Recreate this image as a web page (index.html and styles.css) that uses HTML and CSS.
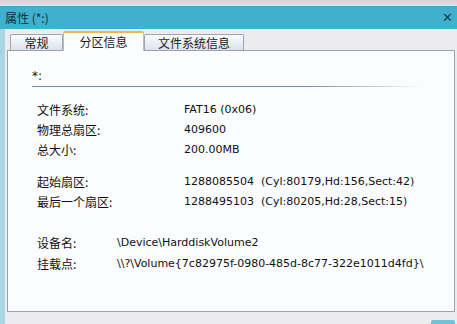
FILE: index.html
```html
<!DOCTYPE html>
<html>
  <head>
    <meta charset="UTF-8" />
    <title>属性 (*:)</title>
    <link rel="stylesheet" href="styles.css">
  </head>
  <body>
    <div class="top-strip"></div>
    <div class="titlebar">
      <span class="title">属性 (*:)</span>
      <span class="close">&#x2715;</span>
    </div>
    <div class="frame">
      <div class="tabs">
        <div class="tab">常规</div>
        <div class="tab active">分区信息</div>
        <div class="tab wide">文件系统信息</div>
      </div>
      <div class="panel">
        <div class="drive">*:</div>
        <div class="rule"></div>

        <div class="group">
          <div class="row"><span class="label">文件系统:</span><span class="value">FAT16 (0x06)</span></div>
          <div class="row"><span class="label">物理总扇区:</span><span class="value">409600</span></div>
          <div class="row"><span class="label">总大小:</span><span class="value">200.00MB</span></div>
        </div>

        <div class="group">
          <div class="row"><span class="label">起始扇区:</span><span class="value">1288085504&nbsp; (Cyl:80179,Hd:156,Sect:42)</span></div>
          <div class="row"><span class="label">最后一个扇区:</span><span class="value">1288495103&nbsp; (Cyl:80205,Hd:28,Sect:15)</span></div>
        </div>

        <div class="group">
          <div class="row"><span class="label short">设备名:</span><span class="value">\Device\HarddiskVolume2</span></div>
          <div class="row"><span class="label short">挂载点:</span><span class="value">\\?\Volume{7c82975f-0980-485d-8c77-322e1011d4fd}\</span></div>
        </div>
      </div>
      <div class="footer">
        <div class="btn-edge"></div>
      </div>
    </div>
  </body>
</html>
```

FILE: styles.css
```css
/* Window reset */
html, body {
  margin: 0;
  padding: 0;
  width: 100%;
  height: 100%;
  overflow: hidden;
  background: #ecebee;
  font-family: Tahoma, "DejaVu Sans", "Noto Sans CJK SC", sans-serif;
  font-size: 11px;
  color: #111;
}

.top-strip {
  height: 6px;
  background: linear-gradient(#cfd4da, #dfe3e8);
}

/* Title bar */
.titlebar {
  height: 23px;
  background: #41b0cf;
  display: flex;
  align-items: center;
  justify-content: space-between;
  padding: 0 4px 0 5px;
}

.title {
  font-family: "Noto Sans CJK SC", sans-serif;
  font-size: 12px;
  color: #10303c;
}

.close {
  font-family: "DejaVu Sans", sans-serif;
  font-size: 13px;
  color: #1d3e4a;
}

/* Body of the dialog */
.frame {
  border-left: 5px solid #a9d6e4;
  height: 295px;
  padding: 0 2px 0 2px;
}

.tabs {
  display: flex;
  padding: 4px 0 0 3px;
  height: 17px;
  align-items: flex-end;
}

.tab {
  font-family: "Noto Sans CJK SC", sans-serif;
  font-size: 12px;
  height: 15px;
  line-height: 15px;
  width: 51px;
  text-align: center;
  color: #222;
  background: linear-gradient(#fbfcfd, #dbe2ec);
  border: 1px solid #9ea6b0;
  border-bottom: none;
  border-radius: 2px 2px 0 0;
}

.tab.active {
  width: 79px;
  height: 18px;
  line-height: 18px;
  background: #fbfcfe;
  border-color: #b9bdc3;
  border-top: 2px solid #f0b54a;
  margin-bottom: -1px;
  position: relative;
  z-index: 1;
}

.tab.wide {
  width: 98px;
}

.panel {
  background: #fbfcfe;
  border: 1px solid #9da3a9;
  height: 260px;
  padding: 0 0 0 24px;
}

.drive {
  margin-top: 18px;
  font-size: 12px;
  height: 14px;
}

.rule {
  margin-top: 3px;
  width: 390px;
  height: 1px;
  background: linear-gradient(to right, #7c8894 70%, rgba(124, 136, 148, 0));
}

.group {
  margin-top: 12px;
  display: flex;
  flex-direction: column;
}

.group + .group {
  margin-top: 12px;
}

.group:last-child {
  margin-top: 21px;
}

.row {
  display: flex;
  height: 20px;
  align-items: center;
  padding-left: 5px;
}

.group:last-child .row {
  height: 21px;
}

.label {
  font-family: "Noto Sans CJK SC", sans-serif;
  font-size: 12px;
  width: 147px;
  flex-shrink: 0;
}

.label.short {
  width: 80px;
}

.value {
  white-space: nowrap;
}

.footer {
  display: flex;
  justify-content: flex-end;
  padding-top: 8px;
}

.btn-edge {
  width: 24px;
  height: 4px;
  background: #6cc3d8;
  border-radius: 2px 2px 0 0;
}
```
